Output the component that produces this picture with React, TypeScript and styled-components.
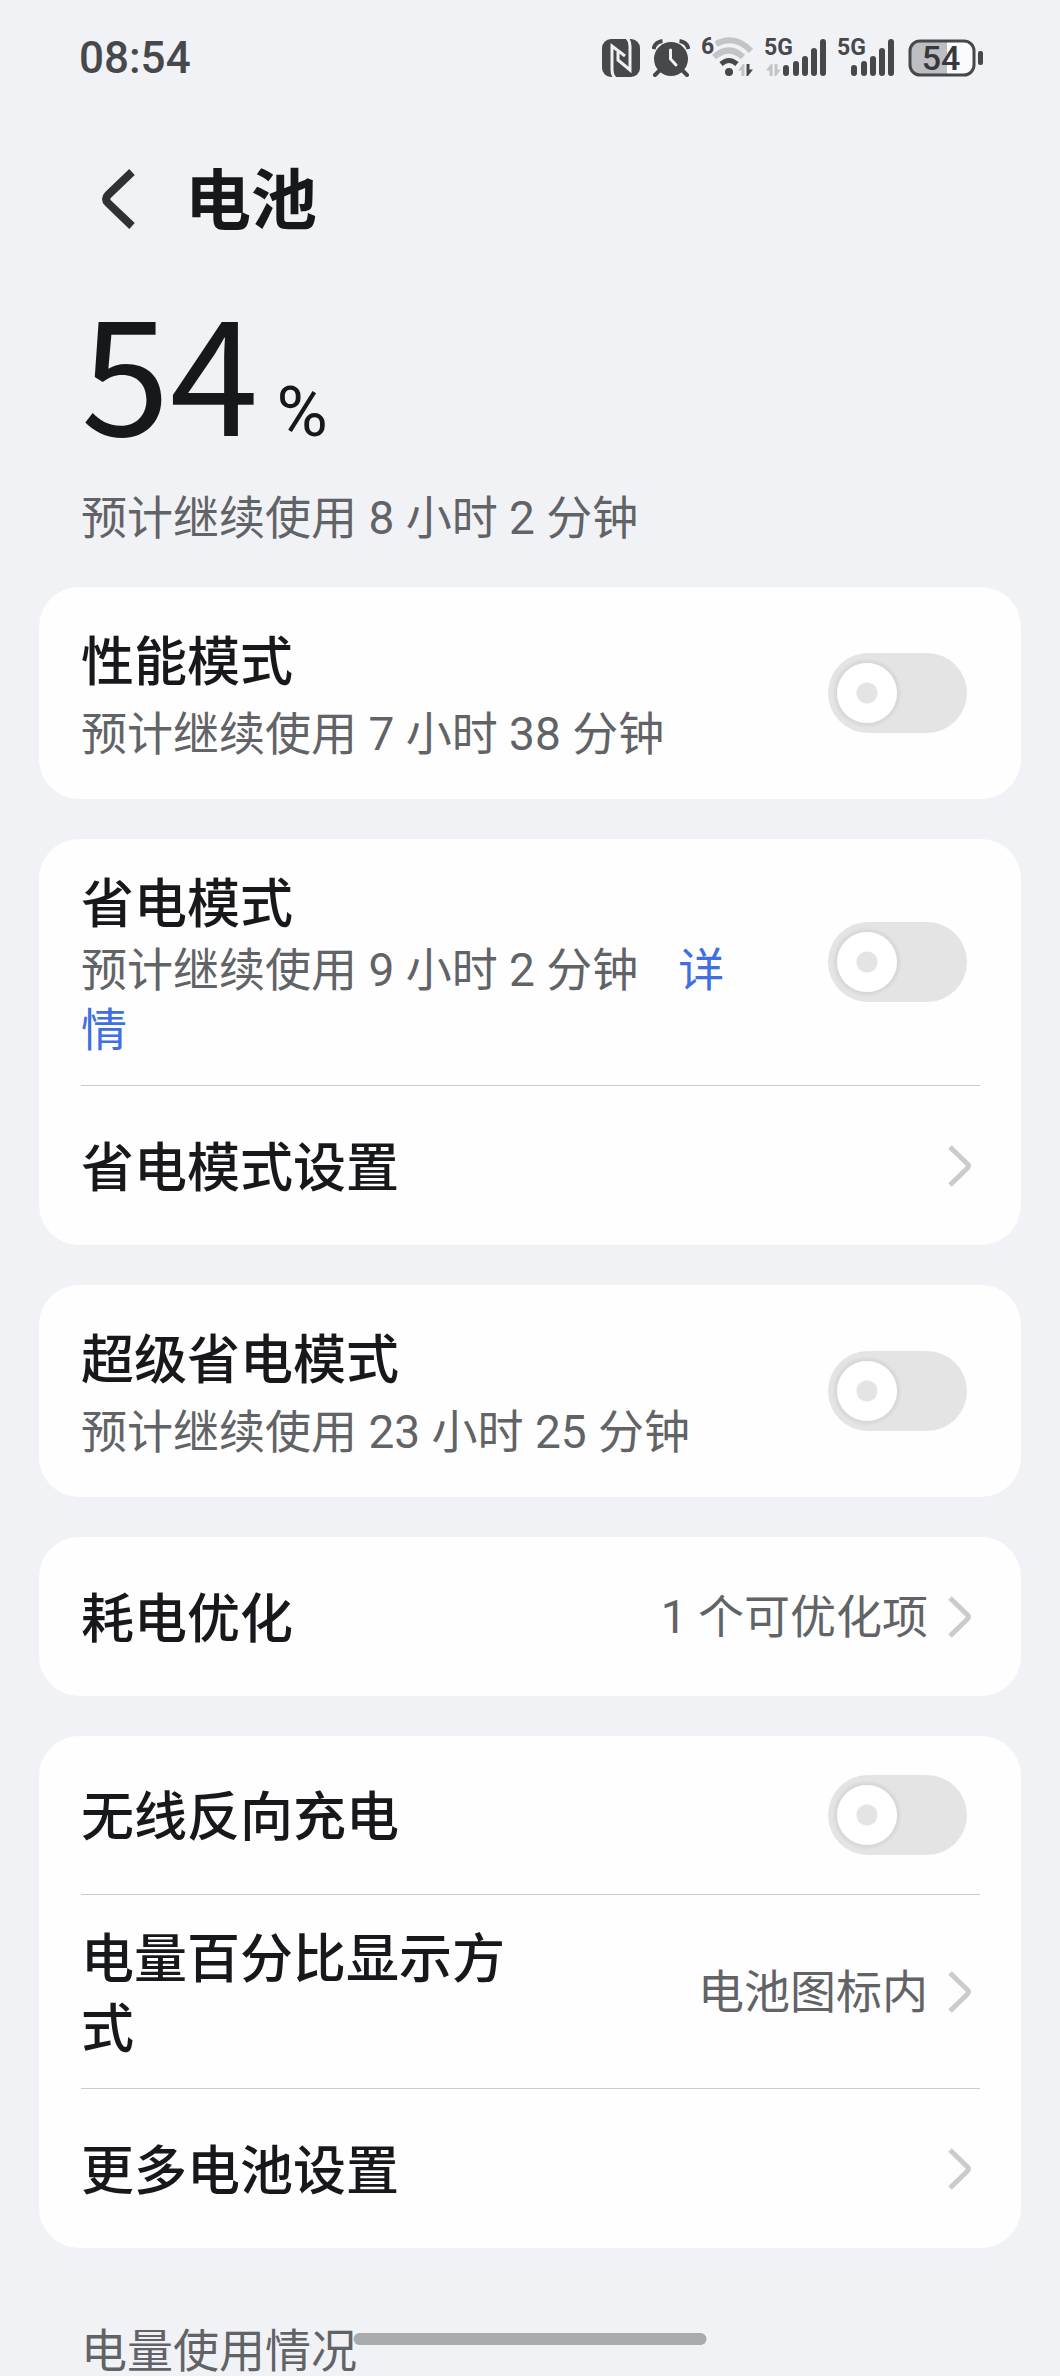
import React from "react";
import styled, { createGlobalStyle } from "styled-components";

const color = {
  page: "#f1f2f6",
  card: "#fefefe",
  ink: "#17181b",
  muted: "#626366",
  status: "#47484c",
  faint: "#c3c4c8",
  line: "#cbcbcd",
  track: "#e4e4e5",
  link: "#3f6fe0",
};

const GlobalStyle = createGlobalStyle`
  *, *::before { box-sizing: border-box; }
  body {
    margin: 0;
    background: ${color.page};
    color: ${color.ink};
    font-family: Roboto, "Noto Sans CJK SC", sans-serif;
  }
`;

const Screen = styled.div`
  display: flex;
  flex-direction: column;
  min-height: 100vh;
`;

const StatusBar = styled.div`
  display: flex;
  align-items: center;
  justify-content: space-between;
  height: 116px;
  padding: 0 76px 0 79px;
  color: ${color.status};
`;

const Clock = styled.time`
  font-size: 44px;
  line-height: 60px;
  font-weight: 500;
`;

const StatusIcons = styled.div`
  display: flex;
  align-items: center;
  gap: 12px;
  svg { display: block; }
`;

const Header = styled.header`
  display: flex;
  align-items: center;
  gap: 50px;
  height: 166px;
  padding: 0 102px;
`;

const BackButton = styled.button`
  display: flex;
  padding: 0;
  border: 0;
  background: none;
  color: #303135;
`;

const PageTitle = styled.h1`
  margin: 0;
  padding-top: 6px;
  font-size: 66px;
  line-height: 80px;
  font-weight: 700;
`;

const Hero = styled.section`
  padding: 2px 81px 39px;
`;

const Level = styled.div`
  display: flex;
  align-items: baseline;
  gap: 18px;
  font-family: "Noto Sans CJK SC", sans-serif;
  font-size: 160px;
  line-height: 165px;
`;

const Percent = styled.span`
  font-family: Roboto, sans-serif;
  font-size: 70px;
  line-height: 70px;
`;

const Estimate = styled.p`
  margin: 39px 0 0;
  color: ${color.muted};
  font-size: 46px;
  line-height: 60px;
`;

const Cards = styled.main`
  display: flex;
  flex-direction: column;
  gap: 40px;
  padding: 0 39px;
`;

const Card = styled.section`
  padding: 0 41px 0 42px;
  border-radius: 40px;
  background: ${color.card};
`;

const Divider = styled.hr`
  height: 1px;
  margin: 0;
  border: 0;
  background: ${color.line};
`;

const rowBox = `
  display: flex;
  align-items: center;
  justify-content: space-between;
  width: 100%;
`;

const Row = styled.div<{ $height: number }>`
  ${rowBox}
  gap: 80px;
  min-height: ${(p) => p.$height}px;
  padding-right: 13px;
`;

const LinkRow = styled.button<{ $height: number }>`
  ${rowBox}
  min-height: ${(p) => p.$height}px;
  padding: 0 8px 0 0;
  border: 0;
  background: none;
  color: inherit;
  font: inherit;
  text-align: left;
`;

const RowText = styled.div`
  flex: 1;
  min-width: 0;
  padding-top: 6px;
`;

const RowLabel = styled.label`
  display: block;
  font-size: 53px;
  line-height: 70px;
  font-weight: 500;
`;

const RowName = styled.span`
  max-width: 50%;
  padding-top: 6px;
  font-size: 53px;
  line-height: 70px;
  font-weight: 500;
`;

const RowNote = styled.p<{ $spaced?: boolean }>`
  margin: ${(p) => (p.$spaced ? 6 : 0)}px 0 0;
  color: ${color.muted};
  font-size: 46px;
  line-height: 60px;
`;

const DetailLink = styled.a`
  margin-left: 40px;
  color: ${color.link};
  text-decoration: none;
`;

const RowEnd = styled.span`
  display: flex;
  align-items: center;
  gap: 20px;
  color: ${color.muted};
  font-size: 46px;
  line-height: 60px;
`;

const Toggle = styled.input`
  appearance: none;
  flex: none;
  display: flex;
  align-items: center;
  width: 139px;
  height: 80px;
  margin: 0;
  padding: 0 9px;
  border-radius: 40px;
  background: ${color.track};

  &::before {
    content: "";
    width: 60px;
    height: 60px;
    border-radius: 50%;
    background: radial-gradient(circle, ${color.track} 10px, #fff 11px);
    box-shadow: 0 0 3px 3px rgba(0, 0, 0, 0.06);
  }
  &:checked { justify-content: flex-end; background: ${color.link}; }
`;

const SectionTitle = styled.h2`
  margin: 78px 0 0;
  padding: 0 81px;
  color: ${color.muted};
  font-size: 46px;
  line-height: 50px;
  font-weight: 400;
`;

const HomeIndicator = styled.div`
  position: fixed;
  bottom: 31px;
  left: 50%;
  width: 33.3%;
  height: 12px;
  border-radius: 6px;
  background: #a9aaae;
  transform: translateX(-50%);
`;

const Chevron = () => (
  <svg width="24" height="42" viewBox="0 0 24 42" fill="none" aria-hidden="true">
    <path d="M2 2 L19 18.500 Q22 21 19 23.500 L2 40" stroke="#cbcbcc" strokeWidth="5" />
  </svg>
);

const NfcIcon = () => (
  <svg width="38" height="38" viewBox="0 0 38 38" fill="none" aria-hidden="true">
    <rect width="38" height="38" rx="9" fill={color.status} />
    <path d="M13 39 Q10 36 10 31 V7 L23 17" stroke={color.page} strokeWidth="3" />
    <path d="M25 -1 Q28 2 28 7 V31 L16 21 V13" stroke={color.page} strokeWidth="3" />
  </svg>
);

const AlarmIcon = () => (
  <svg width="38" height="38" viewBox="0 0 38 38" fill="none" aria-hidden="true">
    <circle cx="19" cy="20" r="17" fill={color.status} />
    <path d="M1.500 10 Q3 3 10.500 2 M36.500 10 Q35 3 27.500 2" stroke={color.status} strokeWidth="4" />
    <path d="M8 31 L3 36 M30 31 L35 36" stroke={color.status} strokeWidth="4" strokeLinecap="round" />
    <path d="M18.500 11 V20 L24 26" stroke={color.page} strokeWidth="3" strokeLinecap="round" />
  </svg>
);

const DataArrows = ({ up, down }: { up: string; down: string }) => (
  <>
    <path d="M6.500 12 H3.500 V6.500 H0 L5 0 H6.500 Z" fill={up} />
    <path d="M8.500 0 H11.500 V5.500 H15 L10 12 H8.500 Z" fill={down} />
  </>
);

const WifiIcon = () => (
  <svg width="51" height="50" viewBox="0 -4 51 50" fill="none" aria-hidden="true">
    <text x="-1" y="17" fontSize="23" fontWeight="700" fill={color.status}>6</text>
    <path d="M14 7 Q33 -3 49 14" stroke={color.faint} strokeWidth="6" />
    <path d="M12 20 Q27 7 41 20" stroke={color.faint} strokeWidth="6" />
    <path d="M19 27 Q27 20 35 27" stroke={color.status} strokeWidth="5" />
    <circle cx="27" cy="35" r="4" fill={color.status} />
    <g transform="translate(36 27)">
      <DataArrows up={color.faint} down={color.status} />
    </g>
  </svg>
);

const SignalIcon = ({ arrows }: { arrows?: boolean }) => (
  <svg
    width={arrows ? 61 : 58}
    height="50"
    viewBox={arrows ? "0 -4 61 50" : "0 -4 58 50"}
    fill="none"
    aria-hidden="true"
  >
    <text x="-1" y="18" fontSize="23" fontWeight="700" fill={color.status}>5G</text>
    {arrows && (
      <g transform="translate(1 27)">
        <DataArrows up={color.faint} down={color.faint} />
      </g>
    )}
    <path
      transform={arrows ? "translate(5 0)" : undefined}
      d="M16 31 V36 M26 27 V36 M35 22 V36 M44 14 V36 M53 5 V36"
      stroke={color.status}
      strokeWidth="6"
      strokeLinecap="round"
    />
  </svg>
);

const BatteryIcon = () => (
  <svg width="76" height="38" viewBox="0 0 76 38" fill="none" aria-hidden="true">
    <rect x="2" y="2" width="64" height="34" rx="10" fill="#fbfbfd" />
    <path d="M12 2 H39 V36 H12 Q2 36 2 26 V12 Q2 2 12 2 Z" fill="#bdbec2" />
    <rect x="2" y="2" width="64" height="34" rx="10" stroke={color.status} strokeWidth="3" />
    <rect x="70" y="12" width="5" height="14" rx="2" fill={color.status} />
    <text x="33" y="31" textAnchor="middle" fontSize="34" fontWeight="500" fill="#37383c">54</text>
  </svg>
);

type ToggleRowProps = {
  id: string;
  label: string;
  height: number;
  spaced?: boolean;
  children?: React.ReactNode;
};

const ToggleRow = ({ id, label, height, spaced, children }: ToggleRowProps) => (
  <Row $height={height}>
    <RowText>
      <RowLabel htmlFor={id}>{label}</RowLabel>
      {children && <RowNote $spaced={spaced}>{children}</RowNote>}
    </RowText>
    <Toggle id={id} type="checkbox" role="switch" />
  </Row>
);

const NavRow = ({ label, value, height }: { label: string; value?: string; height: number }) => (
  <LinkRow type="button" $height={height}>
    <RowName>{label}</RowName>
    <RowEnd>
      {value}
      <Chevron />
    </RowEnd>
  </LinkRow>
);

export default function App() {
  return (
    <Screen>
      <GlobalStyle />
      <StatusBar>
        <Clock>08:54</Clock>
        <StatusIcons>
          <NfcIcon />
          <AlarmIcon />
          <WifiIcon />
          <SignalIcon arrows />
          <SignalIcon />
          <BatteryIcon />
        </StatusIcons>
      </StatusBar>
      <Header>
        <BackButton type="button" aria-label="返回">
          <svg width="33" height="60" viewBox="0 0 33 60" fill="none" aria-hidden="true">
            <path d="M30 3 L6 26 Q2 30 6 34 L30 57" stroke="currentColor" strokeWidth="8" />
          </svg>
        </BackButton>
        <PageTitle>电池</PageTitle>
      </Header>
      <Hero>
        <Level>
          54<Percent>%</Percent>
        </Level>
        <Estimate>预计继续使用 8 小时 2 分钟</Estimate>
      </Hero>
      <Cards>
        <Card>
          <ToggleRow id="performance" label="性能模式" height={212} spaced>
            预计继续使用 7 小时 38 分钟
          </ToggleRow>
        </Card>
        <Card>
          <ToggleRow id="saver" label="省电模式" height={246}>
            预计继续使用 9 小时 2 分钟
            <DetailLink href="#details">详情</DetailLink>
          </ToggleRow>
          <Divider />
          <NavRow label="省电模式设置" height={159} />
        </Card>
        <Card>
          <ToggleRow id="super-saver" label="超级省电模式" height={212} spaced>
            预计继续使用 23 小时 25 分钟
          </ToggleRow>
        </Card>
        <Card>
          <NavRow label="耗电优化" value="1 个可优化项" height={159} />
        </Card>
        <Card>
          <ToggleRow id="reverse-charge" label="无线反向充电" height={158} />
          <Divider />
          <NavRow label="电量百分比显示方式" value="电池图标内" height={193} />
          <Divider />
          <NavRow label="更多电池设置" height={159} />
        </Card>
      </Cards>
      <SectionTitle>电量使用情况</SectionTitle>
      <HomeIndicator />
    </Screen>
  );
}
